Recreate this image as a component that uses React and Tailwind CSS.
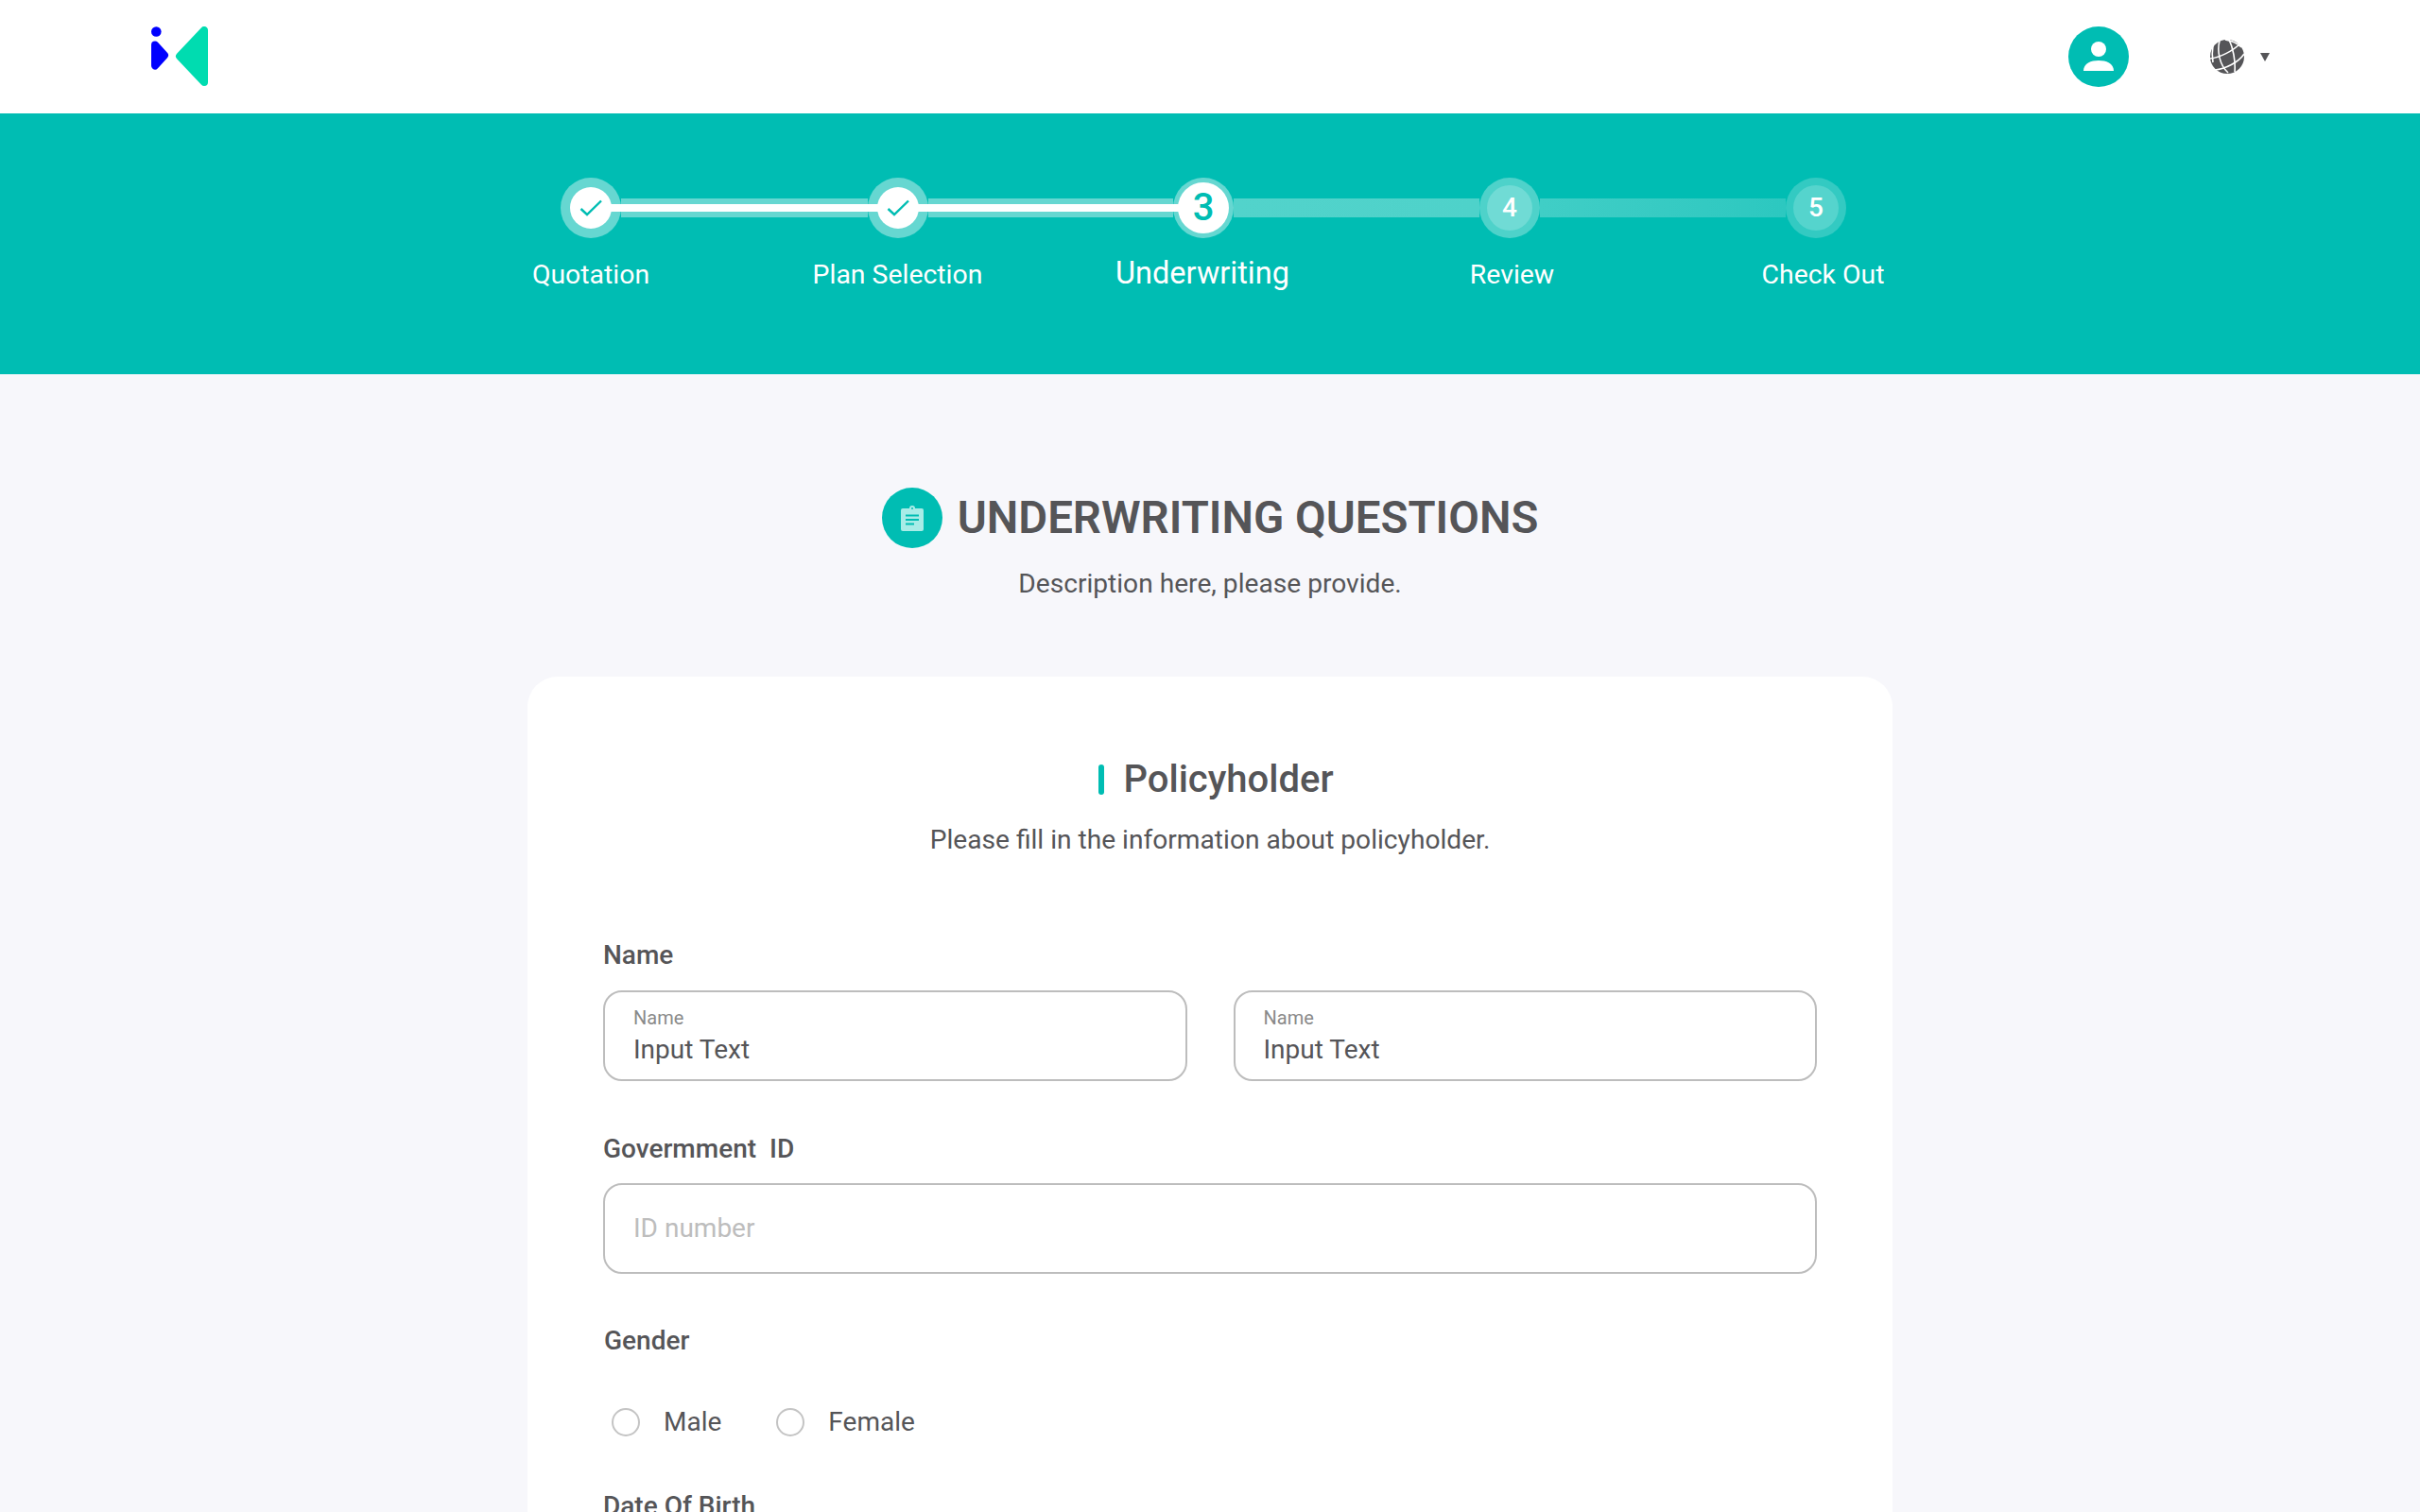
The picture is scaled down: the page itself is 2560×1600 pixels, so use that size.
import React from 'react';

const Logo = () => (
  <svg width="60" height="64" viewBox="160 28 60 64" className="block">
    <circle cx="165.3" cy="33.5" r="5.3" fill="#0000ff" />
    <path d="M164 47.5 L174 58.5 L164 69.5 Z" fill="#0000ff" stroke="#0000ff" strokeWidth="8" strokeLinejoin="round" />
    <path d="M216 32 L216 87 L190 59.5 Z" fill="#00dcb0" stroke="#00dcb0" strokeWidth="8" strokeLinejoin="round" />
  </svg>
);

const Globe = () => (
  <svg width="36" height="36" viewBox="0 0 36 36" className="block">
    <circle cx="18" cy="18" r="18" fill="#555558" />
    <g fill="none" stroke="#fff" strokeWidth="1.6">
      <path d="M3 6 C 2 12 2 18 3 24" />
      <path d="M10 1 C 7 12 10 27 19 35" />
      <path d="M20 0 C 24 8 27 22 26 34" />
      <path d="M0 20 C 10 19 24 12 32 4" />
      <path d="M5 32 C 16 31 30 24 36 15" />
      <path d="M16 0 C 22 1 28 3 33 8" />
    </g>
  </svg>
);

const Caret = () => (
  <svg width="10" height="9" viewBox="0 0 10 9" className="block">
    <path d="M0 0 H10 L5 9 Z" fill="#555558" />
  </svg>
);

const UserIcon = () => (
  <svg width="34" height="34" viewBox="0 0 34 34" className="block">
    <circle cx="17" cy="9" r="8" fill="#fff" />
    <path d="M1 32 C 1 24 9 21 17 21 C 25 21 33 24 33 32 Z" fill="#fff" />
  </svg>
);

const ClipboardIcon = () => (
  <svg width="24" height="27" viewBox="0 0 24 27" className="block">
    <rect x="0" y="3" width="24" height="24" rx="2" fill="#a8ece7" />
    <circle cx="12" cy="3" r="3" fill="#a8ece7" />
    <circle cx="12" cy="3" r="1" fill="#00bdb3" />
    <rect x="5" y="9.5" width="14" height="2" fill="#00bdb3" />
    <rect x="5" y="14" width="14" height="2" fill="#00bdb3" />
    <rect x="5" y="18.5" width="9" height="2" fill="#00bdb3" />
  </svg>
);

const CheckMark = () => (
  <svg width="24" height="18" viewBox="0 0 24 18" className="block">
    <path d="M1.5 10 L8 16 L23 1.5" fill="none" stroke="#00bdb3" strokeWidth="2.4" />
  </svg>
);

const DoneStep = () => (
  <div className="w-16 h-16 rounded-full bg-[#66d7d1] flex items-center justify-center shrink-0">
    <div className="w-11 h-11 rounded-full bg-white flex items-center justify-center">
      <CheckMark />
    </div>
  </div>
);

const DoneLine = ({ width }) => (
  <div className={`${width} h-5 bg-[#66d7d1] relative z-10 flex items-center shrink-0`}>
    <div className="absolute -left-[12px] -right-[12px] h-2 bg-white" />
  </div>
);

const FloatInput = ({ label, value }) => (
  <div className="flex-1 h-24 border-2 border-[#bdbdbd] rounded-[20px] px-[30px] pt-[14px] bg-white">
    <div className="text-[20px] leading-[26px] text-[#8a8a8a]">{label}</div>
    <div className="mt-[3px] text-[28px] leading-[36px] text-[#555558]">{value}</div>
  </div>
);

const Radio = ({ label, className }) => (
  <div className={`flex items-center ${className}`}>
    <div className="w-[30px] h-[30px] rounded-full border-2 border-[#c4c4c4]" />
    <span className="ml-[25px] text-[28px] leading-[36px] text-[#555558]">{label}</span>
  </div>
);

export default function App() {
  return (
    <div className="h-screen overflow-hidden bg-[#f7f7fb] font-['Roboto',sans-serif] text-[#555558]">
      <header className="h-[120px] bg-white flex items-center pl-[160px]">
        <Logo />
        <div className="ml-auto flex items-center pr-[159px]">
          <div className="w-16 h-16 rounded-full bg-[#00bdb3] flex items-center justify-center">
            <UserIcon />
          </div>
          <div className="ml-[86px]"><Globe /></div>
          <div className="ml-[17px]"><Caret /></div>
        </div>
      </header>

      <section className="h-[276px] bg-[#00bdb3] pt-[68px]">
        <div className="flex items-center pl-[593px]">
          <DoneStep />
          <DoneLine width="w-[261px]" />
          <DoneStep />
          <DoneLine width="w-[259px]" />
          <div className="w-16 h-16 rounded-full bg-[#66d7d1] flex items-center justify-center shrink-0">
            <div className="w-[54px] h-[54px] rounded-full bg-white flex items-center justify-center text-[40px] font-medium text-[#00bdb3]">3</div>
          </div>
          <div className="w-[260px] h-5 shrink-0 bg-gradient-to-r from-[#52d3cb] to-[#4ed2ca]" />
          <div className="w-[64px] h-16 rounded-full bg-[#4ed2ca] flex items-center justify-center shrink-0">
            <div className="w-12 h-12 rounded-full bg-[#70dbd5] flex items-center justify-center text-[28px] font-medium text-white">4</div>
          </div>
          <div className="w-[260px] h-5 shrink-0 bg-gradient-to-r from-[#40cec6] to-[#2cc8c0]" />
          <div className="w-16 h-16 rounded-full bg-[#33cac2] flex items-center justify-center shrink-0">
            <div className="w-12 h-12 rounded-full bg-[#55d4cd] flex items-center justify-center text-[28px] font-medium text-white">5</div>
          </div>
        </div>
        <div className="flex items-center mt-[19px] pl-[463px] text-white text-center text-[28.4px] leading-[36px]">
          <div className="w-[324px]">Quotation</div>
          <div className="w-[325px]">Plan Selection</div>
          <div className="w-[320px] text-[32.5px] mb-[3px]">Underwriting</div>
          <div className="w-[335px]">Review</div>
          <div className="w-[323px]">Check Out</div>
        </div>
      </section>

      <main>
        <div className="flex items-center justify-center pt-[120px]">
          <div className="w-16 h-16 rounded-full bg-[#00bdb3] flex items-center justify-center">
            <ClipboardIcon />
          </div>
          <h1 className="ml-4 text-[47.4px] leading-[64px] font-semibold">UNDERWRITING QUESTIONS</h1>
        </div>
        <p className="mt-[20px] text-center text-[28.15px] leading-[36px]">Description here, please provide.</p>

        <div className="w-[1444px] ml-[558px] mt-[80px] bg-white rounded-[32px] px-[80px] pt-[83px] pb-[200px]">
          <div className="flex items-center justify-center pl-[13px]">
            <div className="w-[6px] h-8 rounded-full bg-[#00bdb3]" />
            <h2 className="ml-[20px] text-[40px] leading-[52px] font-medium">Policyholder</h2>
          </div>
          <p className="mt-[20px] text-center text-[28.15px] leading-[36px]">Please fill in the information about policyholder.</p>

          <div className="mt-[86px] text-[28px] leading-[36px] font-medium">Name</div>
          <div className="mt-[19px] flex gap-[49px]">
            <FloatInput label="Name" value="Input Text" />
            <FloatInput label="Name" value="Input Text" />
          </div>

          <div className="mt-[54px] text-[28px] leading-[36px] font-medium">Govermment&nbsp; ID</div>
          <div className="mt-[18px] h-24 border-2 border-[#bdbdbd] rounded-[20px] px-[30px] flex items-center text-[28px] text-[#bdbdbd]">ID number</div>

          <div className="mt-[53px] text-[28px] leading-[36px] font-medium pl-[1px]">Gender</div>
          <div className="mt-[50px] flex items-center">
            <Radio label="Male" className="ml-[9px]" />
            <Radio label="Female" className="ml-[58px]" />
          </div>
          <div className="mt-[53px] text-[28px] leading-[36px] font-medium">Date Of Birth</div>
        </div>
      </main>
    </div>
  );
}
